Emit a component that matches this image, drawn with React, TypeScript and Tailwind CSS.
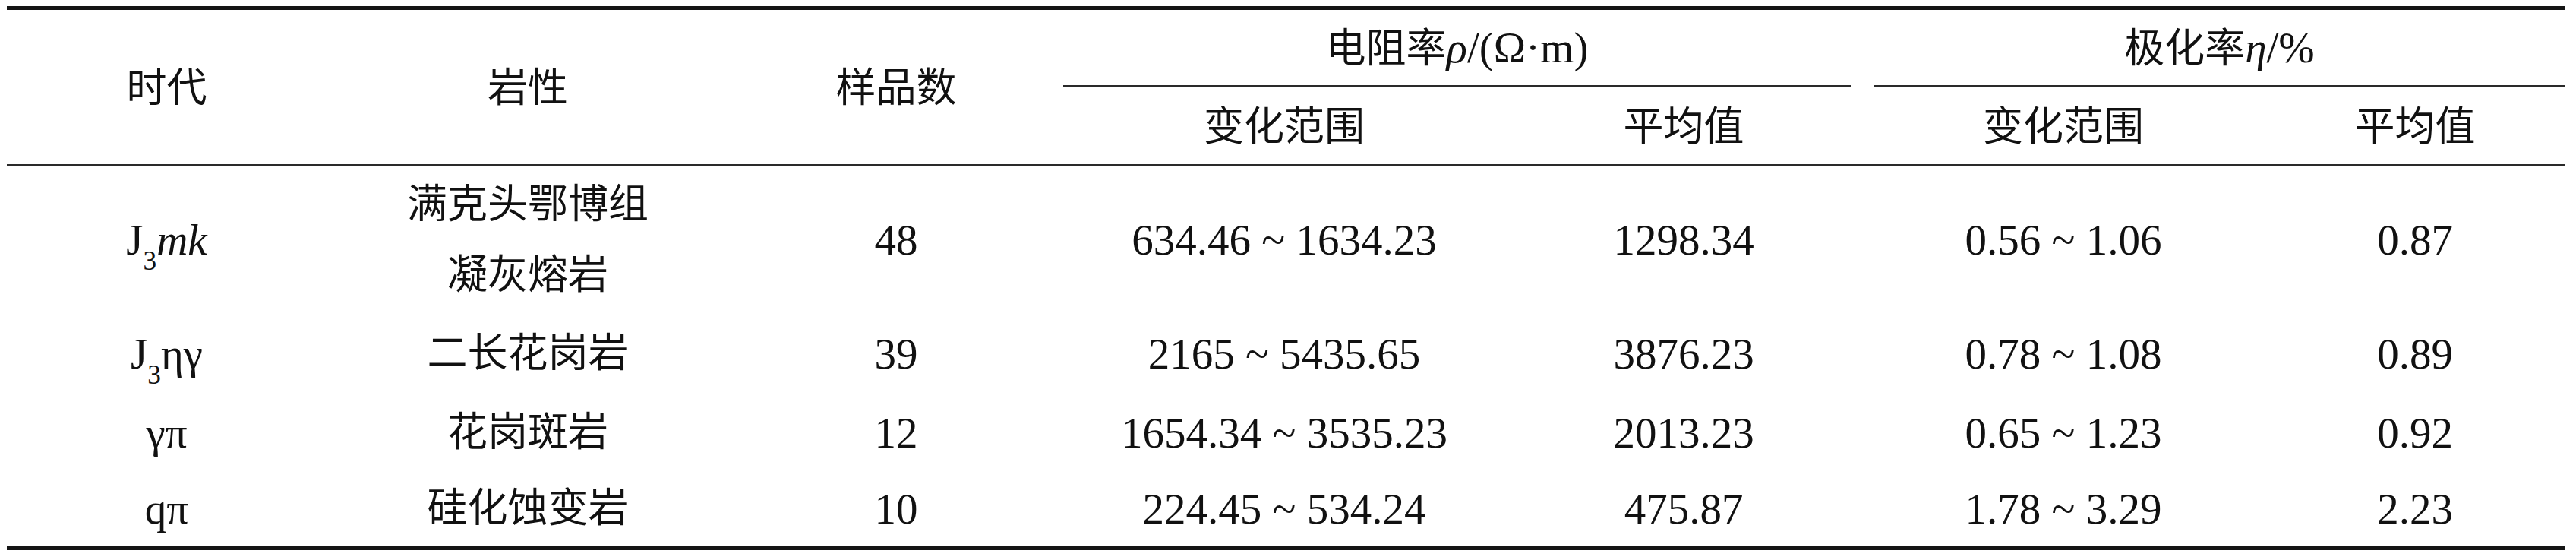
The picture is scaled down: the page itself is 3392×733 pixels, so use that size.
function Zh({ children }: { children: React.ReactNode }) {
  return <span className="text-[53px]">{children}</span>;
}

export default function App() {
  const rows = [
    {
      era: (
        <>
          J<sub className="text-[0.62em] align-[-0.32em]">3</sub>
          <i>mk</i>
        </>
      ),
      rock: ["满克头鄂博组", "凝灰熔岩"],
      count: "48",
      rhoRange: "634.46 ~ 1634.23",
      rhoAvg: "1298.34",
      etaRange: "0.56 ~ 1.06",
      etaAvg: "0.87",
      h: "h-[196px]",
    },
    {
      era: (
        <>
          J<sub className="text-[0.62em] align-[-0.32em]">3</sub>ηγ
        </>
      ),
      rock: ["二长花岗岩"],
      count: "39",
      rhoRange: "2165 ~ 5435.65",
      rhoAvg: "3876.23",
      etaRange: "0.78 ~ 1.08",
      etaAvg: "0.89",
      h: "h-[104px]",
    },
    {
      era: <>γπ</>,
      rock: ["花岗斑岩"],
      count: "12",
      rhoRange: "1654.34 ~ 3535.23",
      rhoAvg: "2013.23",
      etaRange: "0.65 ~ 1.23",
      etaAvg: "0.92",
      h: "h-[104px]",
    },
    {
      era: <>qπ</>,
      rock: ["硅化蚀变岩"],
      count: "10",
      rhoRange: "224.45 ~ 534.24",
      rhoAvg: "475.87",
      etaRange: "1.78 ~ 3.29",
      etaAvg: "2.23",
      h: "h-[100px]",
    },
  ];

  return (
    <div className="min-h-screen bg-white pt-[8px] pl-[9px] text-[#111] font-['Liberation_Serif','Noto_Sans_CJK_SC',serif] text-[57px] leading-none">
      <table className="w-[3369px] table-fixed border-collapse">
        <colgroup>
          <col className="w-[421px]" />
          <col className="w-[530px]" />
          <col className="w-[440px]" />
          <col className="w-[582px]" />
          <col className="w-[470px]" />
          <col className="w-[530px]" />
          <col className="w-[396px]" />
        </colgroup>
        <thead>
          <tr className="h-[102px] border-t-[5px] border-[#151515]">
            <th rowSpan={2} className="font-normal text-center align-middle"><Zh>时代</Zh></th>
            <th rowSpan={2} className="font-normal text-center align-middle"><Zh>岩性</Zh></th>
            <th rowSpan={2} className="font-normal text-center align-middle"><Zh>样品数</Zh></th>
            <th colSpan={2} className="font-normal p-0 align-bottom">
              <div className="mr-[15px] h-[102px] flex items-center justify-center border-b-[3px] border-[#2a2a2a]">
                <span>
                  <Zh>电阻率</Zh><i>ρ</i>/(Ω·m)
                </span>
              </div>
            </th>
            <th colSpan={2} className="font-normal p-0 align-bottom">
              <div className="ml-[15px] h-[102px] flex items-center justify-center border-b-[3px] border-[#2a2a2a]">
                <span>
                  <Zh>极化率</Zh><i>η</i>/%
                </span>
              </div>
            </th>
          </tr>
          <tr className="h-[102px] border-b-[3px] border-[#2a2a2a]">
            <th className="font-normal text-center"><Zh>变化范围</Zh></th>
            <th className="font-normal text-center"><Zh>平均值</Zh></th>
            <th className="font-normal text-center"><Zh>变化范围</Zh></th>
            <th className="font-normal text-center"><Zh>平均值</Zh></th>
          </tr>
        </thead>
        <tbody className="border-b-[6px] border-[#151515]">
          {rows.map((r, i) => (
            <tr key={i} className={r.h}>
              <td className="text-center">{r.era}</td>
              <td className="text-center">
                <div className="flex flex-col items-center gap-[40px]">
                  {r.rock.map((line, j) => (
                    <Zh key={j}>{line}</Zh>
                  ))}
                </div>
              </td>
              <td className="text-center">{r.count}</td>
              <td className="text-center">{r.rhoRange}</td>
              <td className="text-center">{r.rhoAvg}</td>
              <td className="text-center">{r.etaRange}</td>
              <td className="text-center">{r.etaAvg}</td>
            </tr>
          ))}
        </tbody>
      </table>
    </div>
  );
}
